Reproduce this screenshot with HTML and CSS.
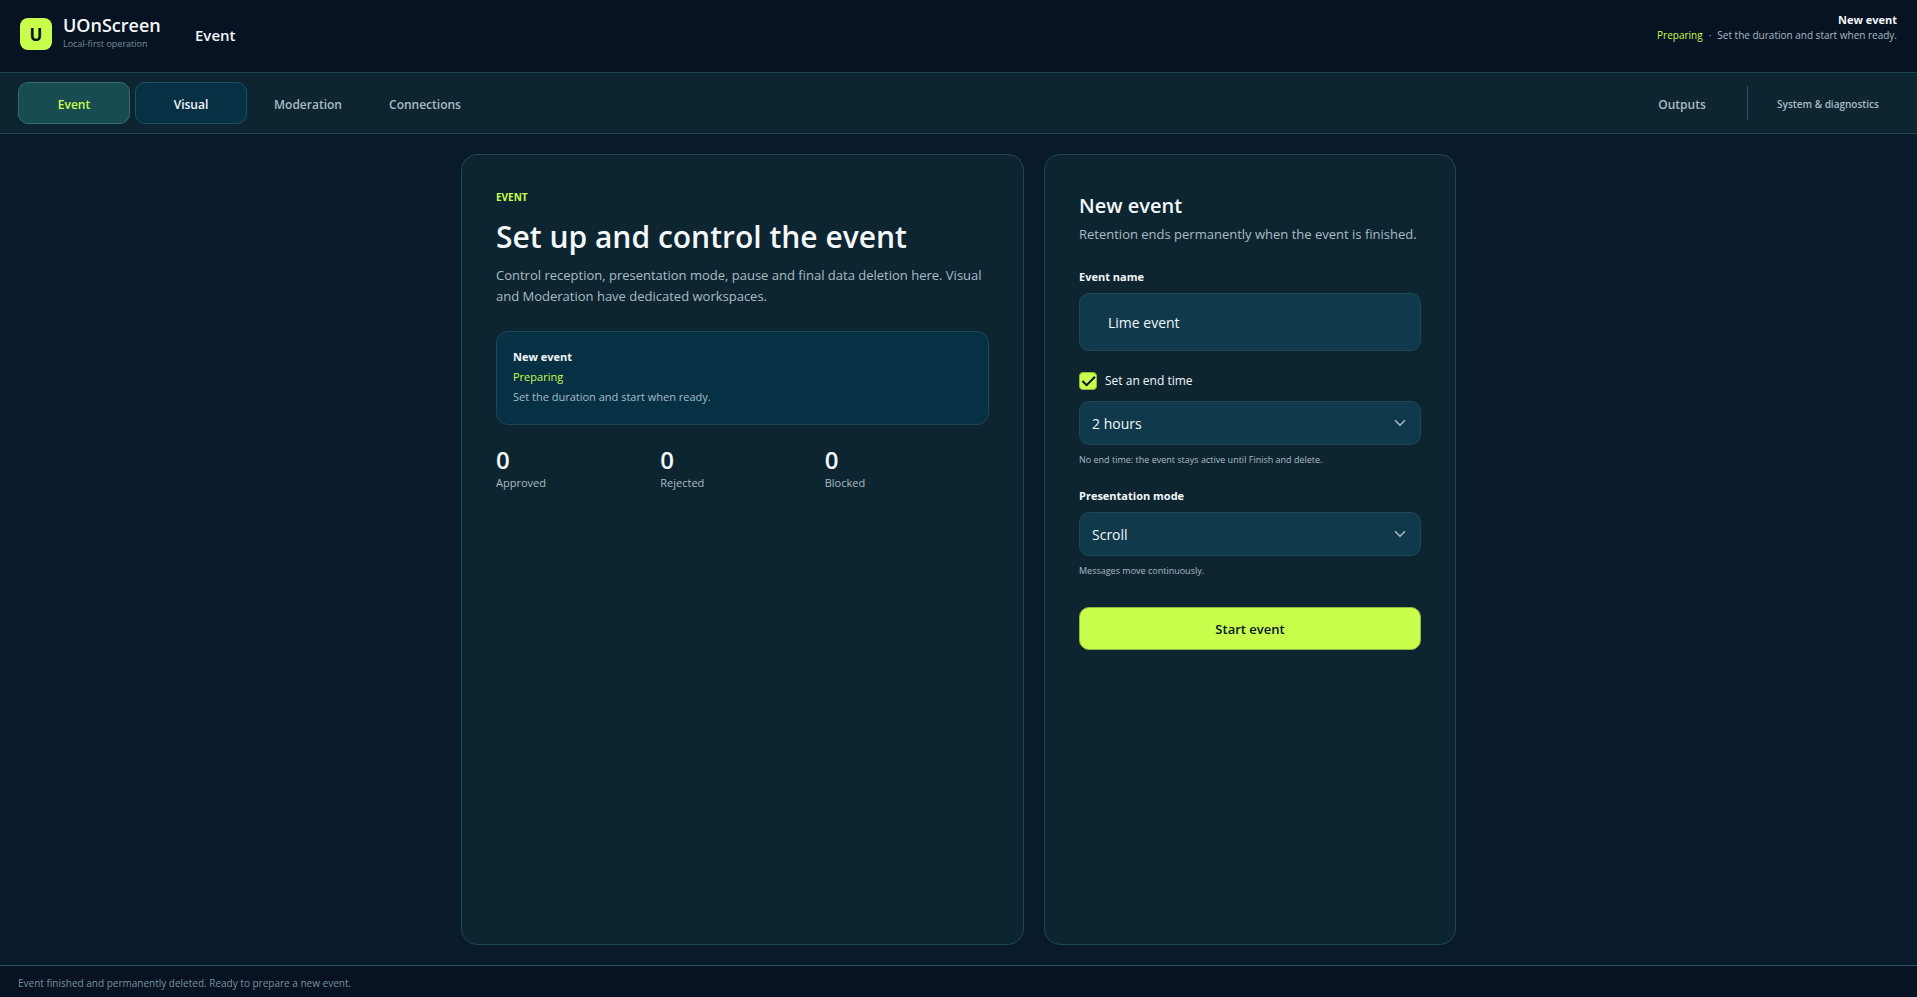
FILE: index.html
```
<!DOCTYPE html>
<html lang="en">

<head>
    <meta charset="UTF-8">
    <meta name="viewport" content="width=device-width, initial-scale=1.0">
    <title>UOnScreen - Event</title>
    <link rel="stylesheet" href="styles.css">
</head>

<body>
    <header class="app-header">
        <div class="logo">U</div>
        <div class="brand">
            <div class="brand-name">UOnScreen</div>
            <div class="brand-sub">Local-first operation</div>
        </div>
        <div class="page-name">Event</div>
        <div class="header-status">
            <strong>New event</strong>
            <div><span class="lime">Preparing</span><span class="dot">·</span>Set the duration and start when ready.</div>
        </div>
    </header>

    <nav class="tabs">
        <button class="tab is-active">Event</button>
        <button class="tab is-outlined">Visual</button>
        <button class="tab">Moderation</button>
        <button class="tab">Connections</button>
        <div class="spacer"></div>
        <button class="tab">Outputs</button>
        <div class="divider"></div>
        <button class="tab tab-system">System &amp; diagnostics</button>
    </nav>

    <main>
        <div class="workspace">
            <section class="card">
                <div class="eyebrow">EVENT</div>
                <h1>Set up and control the event</h1>
                <p class="lead">Control reception, presentation mode, pause and final data deletion here. Visual and Moderation have dedicated workspaces.</p>

                <div class="status-box">
                    <strong>New event</strong>
                    <div class="lime">Preparing</div>
                    <div>Set the duration and start when ready.</div>
                </div>

                <div class="stats">
                    <div>
                        <div class="stat-value">0</div>
                        <div class="stat-label">Approved</div>
                    </div>
                    <div>
                        <div class="stat-value">0</div>
                        <div class="stat-label">Rejected</div>
                    </div>
                    <div>
                        <div class="stat-value">0</div>
                        <div class="stat-label">Blocked</div>
                    </div>
                </div>
            </section>

            <form class="card">
                <h2>New event</h2>
                <p class="intro">Retention ends permanently when the event is finished.</p>

                <label class="field-label" for="event-name">Event name</label>
                <input class="text-input" type="text" id="event-name" value="Lime event">

                <div class="check-row">
                    <span class="check">
                        <input type="checkbox" id="end-time" checked>
                        <svg viewBox="0 0 18 18" width="18" height="18">
                            <path d="M3.4 9L7.6 13.2L16 4.8" />
                        </svg>
                    </span>
                    <label for="end-time">Set an end time</label>
                </div>
                <div class="select">
                    <select id="duration" aria-label="Duration">
                        <option>1 hour</option>
                        <option selected>2 hours</option>
                        <option>4 hours</option>
                    </select>
                    <svg viewBox="0 0 12 8" width="12" height="8">
                        <path d="M1 1.2L6 6.2L11 1.2" />
                    </svg>
                </div>
                <p class="hint">No end time: the event stays active until Finish and delete.</p>

                <label class="field-label" for="mode">Presentation mode</label>
                <div class="select">
                    <select id="mode">
                        <option>Scroll</option>
                    </select>
                    <svg viewBox="0 0 12 8" width="12" height="8">
                        <path d="M1 1.2L6 6.2L11 1.2" />
                    </svg>
                </div>
                <p class="hint">Messages move continuously.</p>

                <button class="start" type="button">Start event</button>
            </form>
        </div>
    </main>

    <footer>Event finished and permanently deleted. Ready to prepare a new event.</footer>
</body>

</html>
```
FILE: styles.css
```
:root {
    --ink: #071222;
    --panel: #0d2531;
    --field: #103a4b;
    --deep: #063044;
    --line: #1d4757;
    --lime: #c8ff4d;
    --text: #f4f8fb;
    --muted: #a9bcc4;
    --dim: #78919c;
}

* {
    box-sizing: border-box;
}

body {
    display: flex;
    flex-direction: column;
    min-height: 100vh;
    margin: 0;
    background-color: #091a2a;
    color: var(--text);
    font-family: "Open Sans", "Noto Sans", sans-serif;
    font-size: 13px;
    line-height: 20px;
}

button,
input,
select {
    font-family: inherit;
    color: inherit;
}

h1,
h2,
p {
    margin: 0;
}

strong {
    font-weight: 700;
}

.lime {
    color: var(--lime);
}

.app-header {
    display: flex;
    align-items: flex-start;
    height: 73px;
    padding: 12px 20px 0;
    background-color: var(--ink);
    border-bottom: 1px solid var(--line);
}

.logo {
    width: 32px;
    height: 32px;
    margin-top: 6px;
    border-radius: 8px;
    background-color: var(--lime);
    color: var(--ink);
    font-size: 17px;
    font-weight: 700;
    line-height: 34px;
    text-align: center;
}

.brand {
    width: 132px;
    margin-left: 11px;
}

.brand-name {
    font-size: 18px;
    font-weight: 600;
    line-height: 26px;
}

.brand-sub {
    color: var(--dim);
    font-size: 9px;
    line-height: 12px;
}

.page-name {
    margin-top: 11px;
    font-size: 15px;
    font-weight: 600;
    line-height: 24px;
}

.header-status {
    margin-left: auto;
    color: var(--muted);
    font-size: 10px;
    line-height: 15px;
    text-align: right;
}

.header-status strong {
    color: var(--text);
    font-size: 11px;
}

.dot {
    margin: 0 6px;
}

.tabs {
    display: flex;
    align-items: center;
    gap: 5px;
    height: 61px;
    padding: 0 18px;
    background-color: var(--panel);
    border-bottom: 1px solid var(--line);
}

.tab {
    width: 112px;
    height: 42px;
    padding: 2px 0 0;
    border: 1px solid transparent;
    border-radius: 10px;
    background-color: transparent;
    color: var(--muted);
    font-size: 12px;
    font-weight: 600;
}

.tab.is-active {
    background-color: #174c50;
    border-color: #34697a;
    color: var(--lime);
}

.tab.is-outlined {
    background-color: var(--deep);
    border-color: #1f4d62;
    color: var(--text);
}

.tab-system {
    width: 142px;
    font-size: 10px;
}

.spacer {
    flex: 1;
}

.divider {
    width: 1px;
    height: 34px;
    margin: 0 4px;
    background-color: #285066;
}

main {
    display: flex;
    flex: 1;
    justify-content: center;
    padding: 20px;
}

.workspace {
    display: grid;
    grid-template-columns: minmax(0, 1fr) 412px;
    gap: 20px;
    width: 100%;
    max-width: 995px;
}

.card {
    padding: 34px;
    background-color: var(--panel);
    border: 1px solid var(--line);
    border-radius: 16px;
}

.eyebrow {
    color: var(--lime);
    font-size: 10px;
    font-weight: 700;
    line-height: 16px;
}

h1 {
    margin-top: 10px;
    font-size: 30px;
    font-weight: 600;
    line-height: 44px;
}

.lead {
    margin-top: 6px;
    color: var(--muted);
    line-height: 21px;
}

.status-box {
    margin-top: 24px;
    padding: 15px 16px 17px;
    background-color: var(--deep);
    border: 1px solid var(--line);
    border-radius: 12px;
    color: var(--muted);
    font-size: 11px;
}

.status-box strong {
    color: var(--text);
}

.stats {
    display: grid;
    grid-template-columns: repeat(3, 1fr);
    margin-top: 20px;
}

.stat-value {
    font-size: 24px;
    font-weight: 600;
    line-height: 30px;
}

.stat-label {
    color: var(--muted);
    font-size: 11px;
    line-height: 16px;
}

h2 {
    font-size: 20px;
    font-weight: 600;
    line-height: 34px;
}

.intro {
    margin: 1px 0 25px;
    color: var(--muted);
}

.field-label {
    display: block;
    margin: 21px 0 8px;
    font-size: 11px;
    font-weight: 700;
    line-height: 16px;
}

.text-input {
    display: block;
    width: 100%;
    height: 58px;
    padding: 0 28px;
    background-color: var(--field);
    border: 1px solid var(--line);
    border-radius: 10px;
    font-size: 14px;
}

.check-row {
    display: flex;
    align-items: center;
    gap: 8px;
    margin: 20px 0 10px;
    font-size: 12px;
}

.check {
    position: relative;
    width: 18px;
    height: 18px;
}

.check input {
    appearance: none;
    display: block;
    width: 18px;
    height: 18px;
    margin: 0;
    border: 1px solid #8fb63f;
    border-radius: 4px;
}

.check input:checked {
    background-color: var(--lime);
}

.check svg {
    position: absolute;
    top: 0;
    left: 0;
    fill: none;
    stroke: var(--ink);
    stroke-width: 2;
    pointer-events: none;
}

.check input:not(:checked) + svg {
    display: none;
}

.select {
    position: relative;
}

.select select {
    appearance: none;
    display: block;
    width: 100%;
    height: 44px;
    padding: 0 36px 0 12px;
    background-color: var(--field);
    border: 1px solid var(--line);
    border-radius: 10px;
    font-size: 14px;
}

.select svg {
    position: absolute;
    top: 18px;
    right: 15px;
    fill: none;
    stroke: var(--muted);
    stroke-width: 1.5;
    pointer-events: none;
}

.hint {
    margin-top: 8px;
    color: var(--muted);
    font-size: 9px;
    line-height: 14px;
}

.start {
    display: block;
    width: 100%;
    height: 43px;
    margin-top: 29px;
    background-color: var(--lime);
    border: 1px solid #8fb63f;
    border-radius: 10px;
    color: var(--ink);
    font-size: 13px;
    font-weight: 600;
}

footer {
    padding: 9px 18px 6px;
    background-color: var(--ink);
    border-top: 1px solid #285066;
    color: var(--dim);
    font-size: 10px;
    line-height: 16px;
}
```
